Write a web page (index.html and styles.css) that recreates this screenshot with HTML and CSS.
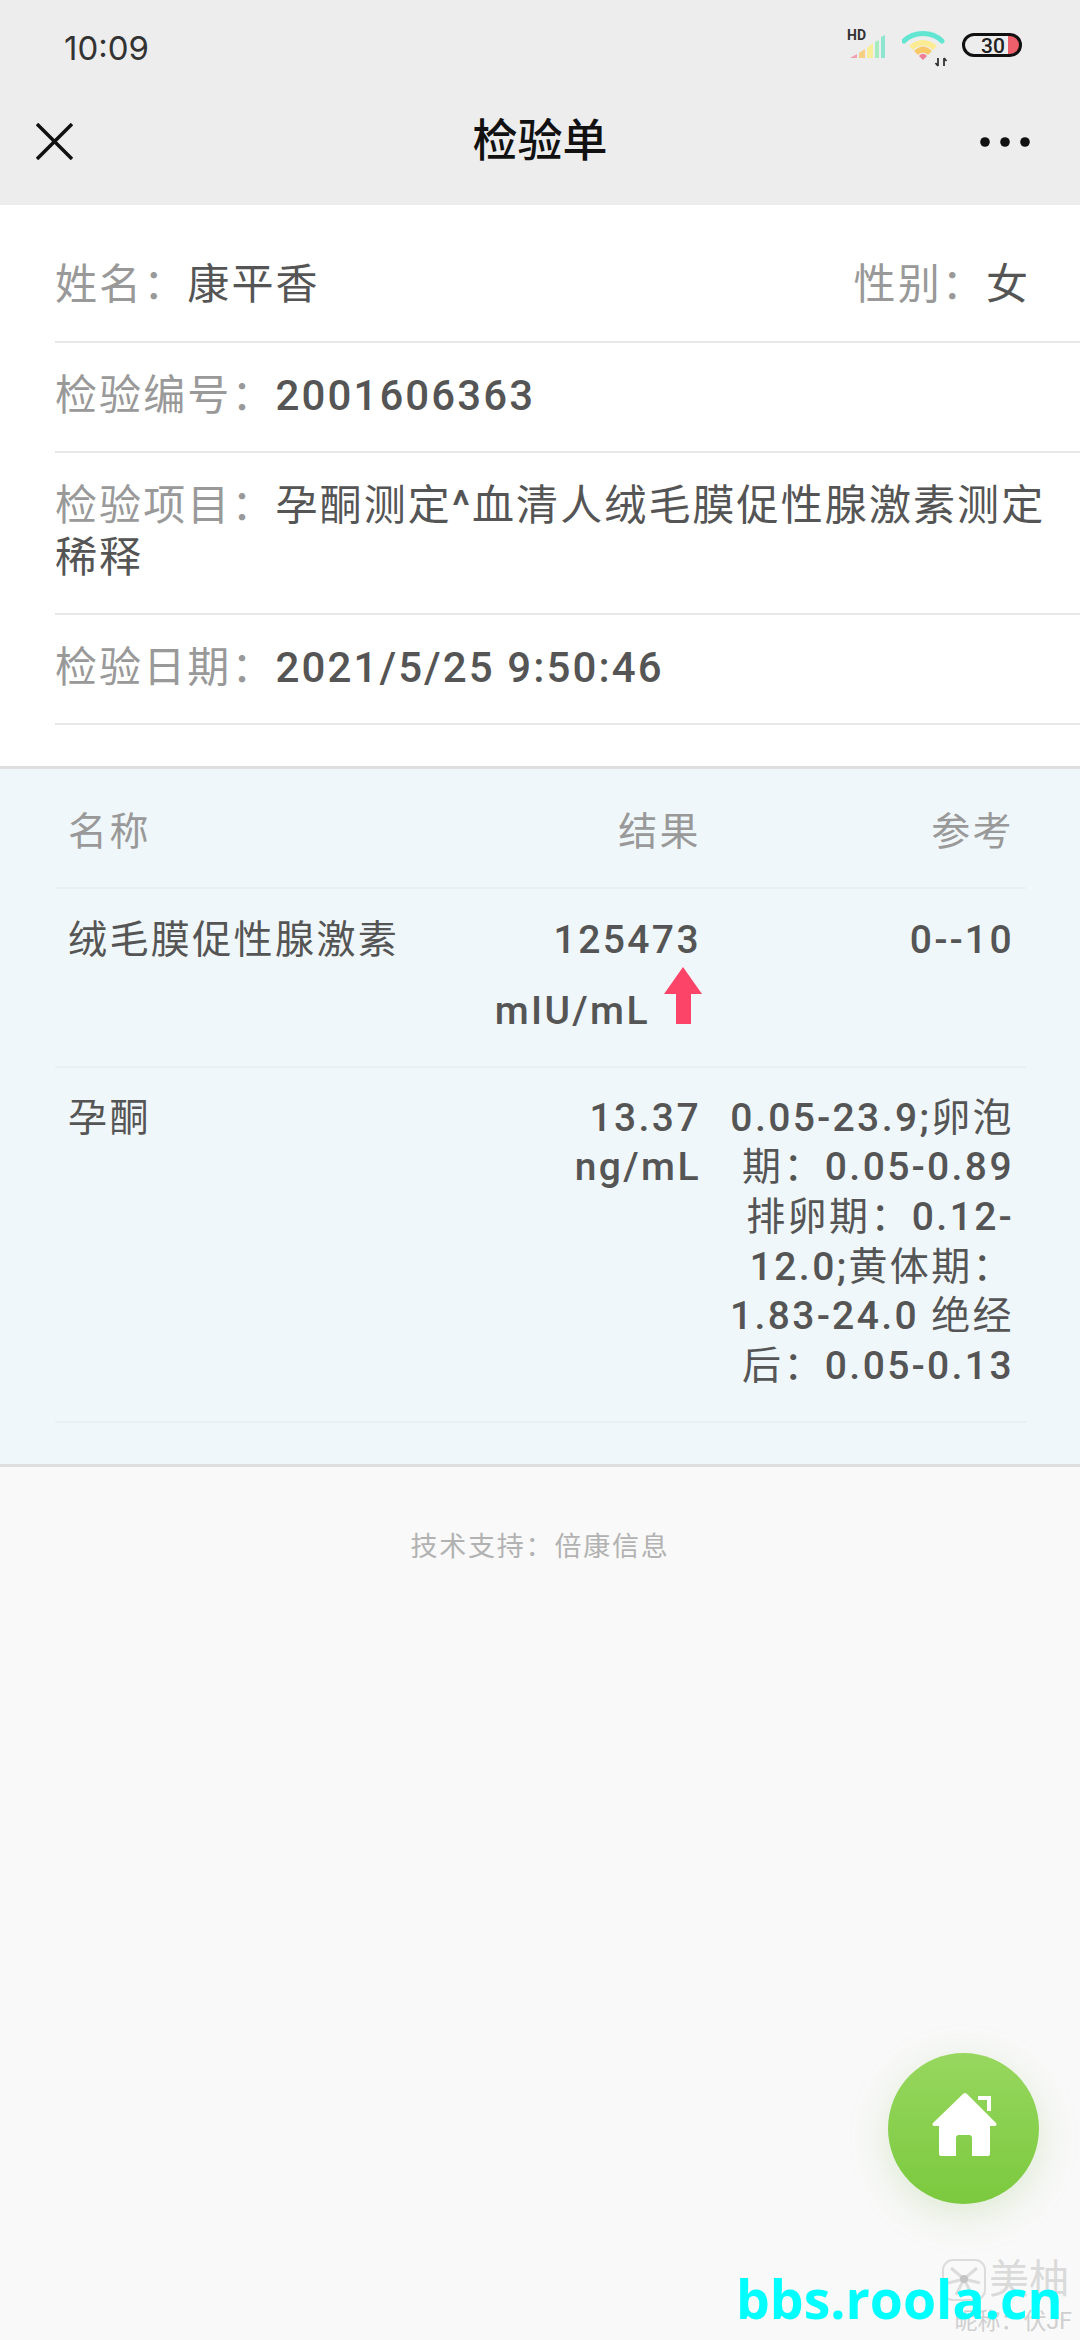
FILE: index.html
```html
<!DOCTYPE html>
<html lang="zh-CN">
<head>
<meta charset="utf-8">
<title>检验单</title>
<link rel="stylesheet" href="styles.css">
</head>
<body>
<div class="page">
  <header class="top">
    <div class="status">
      <span class="time">10:09</span>
      <div class="status-icons">
        <svg class="ic-signal" width="40" height="32" viewBox="0 0 40 32">
          <text x="0" y="11" class="hd">HD</text>
          <path d="M3 29l7-4v4z" fill="#ef9fb0"/>
          <path d="M12 24l6-4v9h-6z" fill="#f8cf82"/>
          <path d="M20 19l6-5v15h-6z" fill="#f8ee9a"/>
          <path d="M28 13l4-2v18h-4z" fill="#a4ecc0"/>
          <path d="M34 8l4-2v23h-4z" fill="#8fe6d0"/>
        </svg>
        <svg class="ic-wifi" width="46" height="36" viewBox="0 0 46 36">
          <path d="M2 10C12 0 30 0 40 10" fill="none" stroke="#62e6d2" stroke-width="5" stroke-linecap="round"/>
          <path d="M7 15C15 7 27 7 35 15L31 19C25 13 17 13 11 19Z" fill="#fbec93"/>
          <path d="M12 20C18 14 24 14 30 20L26 24C23 21 19 21 16 24Z" fill="#f9c867"/>
          <path d="M17 25C20 22 22 22 25 25L21 29Z" fill="#ee7f96"/>
          <path d="M36 27v8M36 35l-2.500-3M42 27v8M42 27l2.500 3" fill="none" stroke="#333" stroke-width="1.800"/>
        </svg>
        <svg class="ic-batt" width="60" height="24" viewBox="0 0 60 24">
          <path d="M46 3h4a9 9 0 0 1 0 18h-4z" fill="#ee5f6c"/>
          <rect x="1.500" y="1.500" width="57" height="21" rx="10.500" fill="none" stroke="#111" stroke-width="3"/>
          <text x="31" y="20" class="batt">30</text>
        </svg>
      </div>
    </div>
    <nav class="nav">
      <svg class="ic-close" width="37" height="37" viewBox="0 0 37 37"><path d="M1 1l35 35M36 1L1 36" stroke="#111" stroke-width="3.500" fill="none"/></svg>
      <h1 class="title">检验单</h1>
      <svg class="ic-more" width="50" height="12" viewBox="0 0 50 12"><circle cx="5" cy="6" r="4.800" fill="#111"/><circle cx="25" cy="6" r="4.800" fill="#111"/><circle cx="45" cy="6" r="4.800" fill="#111"/></svg>
    </nav>
  </header>

  <section class="info">
    <div class="info-row split">
      <div><span class="lab">姓名&#xFF1A;</span><span class="val">康平香</span></div>
      <div><span class="lab">性别&#xFF1A;</span><span class="val">女</span></div>
    </div>
    <div class="info-row"><span class="lab">检验编号&#xFF1A;</span><span class="val">2001606363</span></div>
    <div class="info-row"><span class="lab">检验项目&#xFF1A;</span><span class="val">孕酮测定^血清人绒毛膜促性腺激素测定稀释</span></div>
    <div class="info-row"><span class="lab">检验日期&#xFF1A;</span><span class="val">2021/5/25 9:50:46</span></div>
  </section>

  <section class="results">
    <div class="res-row head">
      <div>名称</div><div class="r">结果</div><div class="r">参考</div>
    </div>
    <div class="res-row">
      <div>绒毛膜促性腺激素</div>
      <div class="r">125473 <span class="unit">mIU/mL<svg class="ic-up" width="38" height="57" viewBox="0 0 38 57"><path d="M19 0L38 27H27V57H12V27H0Z" fill="#fb4468"/></svg></span></div>
      <div class="r">0--10</div>
    </div>
    <div class="res-row">
      <div>孕酮</div>
      <div class="r">13.37 ng/mL</div>
      <div class="r">0.05-23.9;卵泡期&#xFF1A;0.05-0.89 排卵期&#xFF1A;0.12-12.0;黄体期&#xFF1A;1.83-24.0 绝经后&#xFF1A;0.05-0.13</div>
    </div>
  </section>

  <footer class="support">技术支持&#xFF1A;倍康信息</footer>

  <button class="fab" type="button" aria-label="首页">
    <svg width="68" height="68" viewBox="0 0 68 68">
      <path d="M33 2a3 3 0 0 1 4 0L66 31a2 2 0 0 1-1 3H60V62a2 2 0 0 1-2 2H42V46a3 3 0 0 0-3-3H29a3 3 0 0 0-3 3V64H11a2 2 0 0 1-2-2V34H4a2 2 0 0 1-1-3Z" fill="#fff"/>
      <path d="M48 6H59V19" fill="none" stroke="#fff" stroke-width="4"/>
    </svg>
  </button>

  <div class="mark">
    <div class="mark-top">
      <svg width="44" height="42" viewBox="0 0 44 42"><rect x="1" y="1" width="42" height="40" rx="10" fill="none" stroke="#dcdcdc" stroke-width="2"/><path d="M22 20L9 9M22 20L35 9M22 20L6 24M22 20L38 24M22 20L14 36M22 20L30 36" stroke="#dcdcdc" stroke-width="3"/><circle cx="22" cy="20" r="4" fill="#c4c4c4"/></svg>
      <span class="mark-name">美柚</span>
    </div>
    <div class="mark-nick">昵称&#xFF1A;伏JF</div>
  </div>
  <div class="brand">bbs.roola.cn</div>
</div>
</body>
</html>
```

FILE: styles.css
```css
* { box-sizing: border-box; margin: 0; padding: 0; }
html, body { width: 1080px; height: 2340px; overflow: hidden; }
body { font-family: Roboto, "Noto Sans CJK SC", sans-serif; background: #f9f9f9; }
.page { position: relative; width: 1080px; height: 2340px; background: #f9f9f9; }

.top { height: 205px; background: #ededed; display: flex; flex-direction: column; }
.status { height: 90px; display: flex; align-items: flex-start; justify-content: space-between; padding: 28px 58px 0 64px; }
.time { font-size: 33px; line-height: 40px; color: #333; font-family: Inter, Roboto, sans-serif; }
.status-icons { display: flex; align-items: flex-start; }
.ic-signal { margin: 1px 15px 0 0; }
.ic-wifi { margin: 3px 14px 0 0; }
.ic-batt { margin-top: 5px; }
.hd { font: 700 14px Roboto, sans-serif; fill: #333; }
.batt { font: 500 21px Roboto, sans-serif; fill: #222; text-anchor: middle; }
.nav { flex: 1; display: grid; grid-template-columns: 1fr auto 1fr; align-items: center; padding: 0 36px 12px; }
.ic-more { justify-self: end; margin-right: 14px; }
.title { font-size: 45px; font-weight: 500; line-height: 60px; color: #111; }

.info { background: #fff; padding: 26px 0 43px 55px; border-bottom: 3px solid #dedede; height: 564px; }
.info-row { padding: 27px 20px 29px 0; border-bottom: 2px solid #e8e8e8; font-size: 42px; line-height: 52px; letter-spacing: 2.100px; }
.info-row.split { display: flex; justify-content: space-between; padding: 28px 50px 30px 0; }
.lab { color: #999; }
.val { color: #555; font-family: "Roboto Medium", Roboto, "Noto Sans CJK SC", sans-serif; }

.results { background: #f0f7fa; padding: 0 54px 41px 55px; border-bottom: 3px solid #dedede; }
.res-row { display: grid; grid-template-columns: 1fr 225px 313px; padding: 27px 12px 29px 13px; border-bottom: 2px solid #e9eff2; font-size: 39px; line-height: 49.600px; letter-spacing: 2.400px; color: #555; font-family: "Roboto Medium", Roboto, "Noto Sans CJK SC", sans-serif; }
.res-row.head { padding: 39px 12px 29px 13px; color: #999; }
.res-row:last-child { padding: 26px 12px 30px 13px; }
.r { text-align: right; }
.unit { display: block; white-space: nowrap; margin: 2px -1px 0 0; }
.ic-up { margin-left: 14px; }

.support { margin-top: 62px; text-align: center; font-size: 27px; line-height: 36px; letter-spacing: 1.800px; color: #b2b2b2; }

.fab { position: absolute; left: 888px; top: 2053px; width: 151px; height: 151px; border: 0; border-radius: 50%; background: linear-gradient(#97d75f, #7bc93e); box-shadow: 0 10px 40px rgba(120, 180, 70, .22); display: flex; align-items: center; justify-content: center; padding-bottom: 6px; }
.brand { position: absolute; left: 736px; top: 2262px; font: 700 53.500px/74px "Open Sans", sans-serif; color: #00ffff; }
.mark { position: absolute; left: 942px; top: 2258px; width: 130px; color: #dadada; }
.mark-top { display: flex; align-items: center; gap: 3px; }
.mark-name { font-size: 40px; line-height: 44px; }
.mark-nick { font-size: 23px; line-height: 28px; margin-top: 6px; text-align: right; color: #cfcfcf; }
```
